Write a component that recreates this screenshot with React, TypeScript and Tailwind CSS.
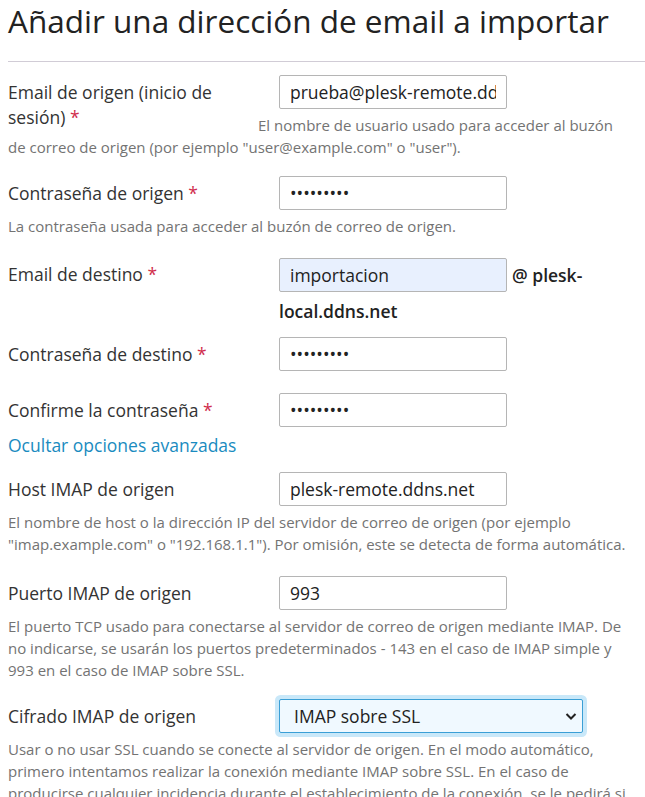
import React from "react";

const FONT = { fontFamily: '"Open Sans", "Liberation Sans", sans-serif' };

function Req() {
  return <span className="text-[#d02d4c]"> *</span>;
}

interface RowProps {
  label: React.ReactNode;
  children: React.ReactNode;
  hint?: React.ReactNode;
  className?: string;
}

function Row({ label, children, hint, className = "" }: RowProps) {
  return (
    <div className={`flow-root ${className}`}>
      <label className="float-left w-[250px] pt-[5px] text-[17.5px] leading-[25px] text-[#333]">{label}</label>
      <div className="ml-[271px] text-[17.5px] leading-[25px]">{children}</div>
      {hint && <div className="mt-[5px] pr-[12px] text-[15px] leading-[22px] text-[#737373]">{hint}</div>}
    </div>
  );
}

function TextInput({ value, type = "text", autofill = false }: { value: string; type?: string; autofill?: boolean }) {
  return (
    <input
      type={type}
      defaultValue={value}
      readOnly
      className={`h-[34px] w-[228px] rounded-[2px] border border-[#b5b5b5] px-[10px] text-[17.5px] text-[#222] outline-none ${
        autofill ? "bg-[#e8f0fe]" : "bg-white"
      }`}
    />
  );
}

export default function App() {
  return (
    <div style={FONT} className="min-h-[797px] bg-white pl-[8px] text-[#333]">
      <h1 className="pt-[1px] text-[31.5px] font-normal leading-[40px] text-[#222]">
        Añadir una dirección de email a importar
      </h1>
      <div className="mt-[20px] border-t border-[#d1ccd6]" />

      <div className="mt-[13px] flex flex-col">
        <Row
          label={<>Email de origen (inicio de sesión)<Req /></>}
          hint={<>El nombre de usuario usado para acceder al buzón de correo de origen (por ejemplo "user@example.com" o "user").</>}
        >
          <TextInput value="prueba@plesk-remote.ddns.net" />
        </Row>

        <Row
          className="mt-[18px]"
          label={<>Contraseña de origen<Req /></>}
          hint="La contraseña usada para acceder al buzón de correo de origen."
        >
          <TextInput value="prueba123" type="password" />
        </Row>

        <Row className="mt-[20px]" label={<>Email de destino<Req /></>}>
          <TextInput value="importacion" autofill />
          <span className="ml-[5px] font-semibold leading-[36px] text-[#222]">@ plesk-local.ddns.net</span>
        </Row>

        <Row className="mt-[8px]" label={<>Contraseña de destino<Req /></>}>
          <TextInput value="prueba123" type="password" />
        </Row>

        <Row className="mt-[22px]" label={<>Confirme la contraseña<Req /></>}>
          <TextInput value="prueba123" type="password" />
        </Row>

        <a href="#" className="mt-[6px] self-start text-[17.5px] leading-[25px] text-[#1a8bc0]">
          Ocultar opciones avanzadas
        </a>

        <Row
          className="mt-[14px]"
          label="Host IMAP de origen"
          hint={<>El nombre de host o la dirección IP del servidor de correo de origen (por ejemplo "imap.example.com" o "192.168.1.1"). Por omisión, este se detecta de forma automática.</>}
        >
          <TextInput value="plesk-remote.ddns.net" />
        </Row>

        <Row
          className="mt-[21px]"
          label="Puerto IMAP de origen"
          hint="El puerto TCP usado para conectarse al servidor de correo de origen mediante IMAP. De no indicarse, se usarán los puertos predeterminados - 143 en el caso de IMAP simple y 993 en el caso de IMAP sobre SSL."
        >
          <TextInput value="993" />
        </Row>

        <Row
          className="mt-[18px]"
          label="Cifrado IMAP de origen"
          hint="Usar o no usar SSL cuando se conecte al servidor de origen. En el modo automático, primero intentamos realizar la conexión mediante IMAP sobre SSL. En el caso de producirse cualquier incidencia durante el establecimiento de la conexión, se le pedirá si desea continuar usando IMAP simple."
        >
          <div className="relative inline-block">
            <select
              defaultValue="ssl"
              className="h-[34px] w-[304px] appearance-none rounded-[2px] border border-[#3a9fd6] bg-[#f0f9ff] px-[14px] text-[17.5px] text-[#222] shadow-[0_0_0_4px_#c9e8f9] outline-none"
            >
              <option value="auto">Automático</option>
              <option value="ssl">IMAP sobre SSL</option>
              <option value="plain">IMAP simple</option>
            </select>
            <svg
              className="pointer-events-none absolute right-[6px] top-[13px] h-[9px] w-[12px]"
              viewBox="0 0 12 9"
              fill="none"
              stroke="#222"
              strokeWidth="2"
            >
              <path d="M1.5 2l4.5 4.5L10.5 2" />
            </svg>
          </div>
        </Row>
      </div>
    </div>
  );
}
